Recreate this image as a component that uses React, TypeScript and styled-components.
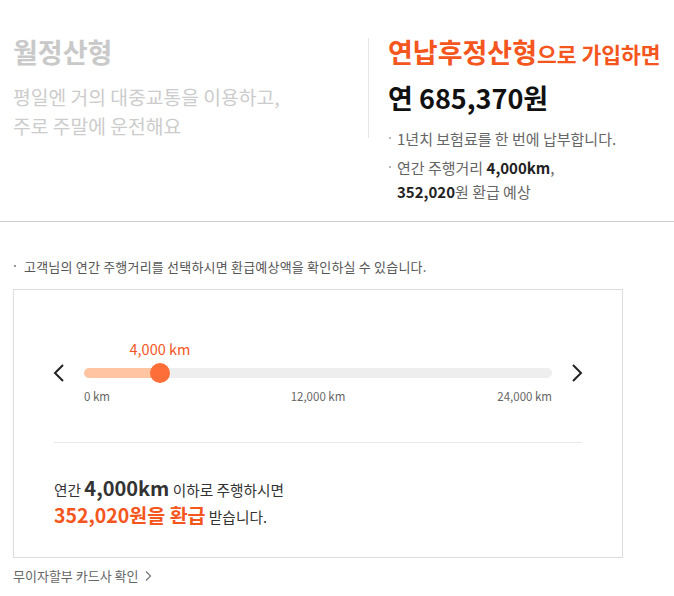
import styled, { createGlobalStyle } from "styled-components";

const ORANGE = "#f4561d";
const FONT = `"Noto Sans CJK KR", "Noto Sans", sans-serif`;

const GlobalStyle = createGlobalStyle`
  body {
    margin: 0;
    background: #fff;
    font-family: ${FONT};
  }
  * { box-sizing: border-box; }
`;

const MAX_KM = 24000;
const SELECTED_KM = 4000;

export default function App() {
  const pos = (SELECTED_KM / MAX_KM) * 100;
  return (
    <Page>
      <GlobalStyle />
      <Compare>
        <PlanColumn>
          <PlanTitle>월정산형</PlanTitle>
          <PlanDesc>
            평일엔 거의 대중교통을 이용하고,
            <br />
            주로 주말에 운전해요
          </PlanDesc>
        </PlanColumn>
        <ResultColumn>
          <ResultTitle>
            연납후정산형<small>으로 가입하면</small>
          </ResultTitle>
          <Amount>연 685,370원</Amount>
          <BulletList>
            <li>1년치 보험료를 한 번에 납부합니다.</li>
            <li>
              연간 주행거리 <b>4,000km</b>,
              <br />
              <b>352,020</b>원 환급 예상
            </li>
          </BulletList>
        </ResultColumn>
      </Compare>

      <Section>
        <Note>고객님의 연간 주행거리를 선택하시면 환급예상액을 확인하실 수 있습니다.</Note>
        <Box>
          <SliderRow>
            <Arrow aria-label="이전">
              <svg width="14" height="20" viewBox="0 0 14 20">
                <polyline points="11,2 3,10 11,18" fill="none" stroke="#222" strokeWidth="2" />
              </svg>
            </Arrow>
            <SliderArea>
              <ValueRow>
                <ValueLabel style={{ left: `calc(${pos}% - 2px)` }}>4,000 km</ValueLabel>
              </ValueRow>
              <Track>
                <Fill style={{ width: `calc(${pos}% - 2px)` }} />
                <Thumb style={{ left: `calc(${pos}% - 2px)` }} />
              </Track>
              <Ticks>
                <span>0 km</span>
                <span>12,000 km</span>
                <span>24,000 km</span>
              </Ticks>
            </SliderArea>
            <Arrow $right aria-label="다음">
              <svg width="14" height="20" viewBox="0 0 14 20">
                <polyline points="3,2 11,10 3,18" fill="none" stroke="#222" strokeWidth="2" />
              </svg>
            </Arrow>
          </SliderRow>
          <Separator />
          <Summary>
            연간 <Strong>4,000km</Strong> 이하로 주행하시면
            <br />
            <Refund>352,020원을 환급</Refund> 받습니다.
          </Summary>
        </Box>
        <CardLink>
          무이자할부 카드사 확인
          <svg width="8" height="12" viewBox="0 0 8 12">
            <polyline points="2,1.5 6.5,6 2,10.5" fill="none" stroke="#777" strokeWidth="1.2" />
          </svg>
        </CardLink>
      </Section>
    </Page>
  );
}

const Page = styled.div`
  width: 674px;
  color: #222;
`;

const Compare = styled.div`
  display: flex;
  align-items: flex-start;
  padding: 38px 0 17px;
  border-bottom: 1px solid #cccccc;
`;

const PlanColumn = styled.div`
  width: 369px;
  padding-left: 13px;
  border-right: 1px solid #e6e6e6;
  height: 100px;
`;

const PlanTitle = styled.h2`
  margin: 0;
  font-size: 27px;
  line-height: 28px;
  font-weight: 700;
  color: #c9c9c9;
`;

const PlanDesc = styled.p`
  margin: 17px 0 0;
  font-size: 19.3px;
  line-height: 29px;
  color: #cccccc;
  white-space: nowrap;
`;

const ResultColumn = styled.div`
  flex: 1;
  padding-left: 19px;
`;

const ResultTitle = styled.h2`
  margin: 0;
  font-size: 27px;
  line-height: 28px;
  font-weight: 700;
  color: ${ORANGE};
  white-space: nowrap;

  small {
    font-size: 21.5px;
    font-weight: 700;
  }
`;

const Amount = styled.div`
  margin-top: 13px;
  font-size: 27px;
  line-height: 34px;
  font-weight: 700;
  color: #111;
`;

const BulletList = styled.ul`
  list-style: none;
  margin: 12px 0 0;
  padding: 0;

  li {
    position: relative;
    padding-left: 9px;
    font-size: 15px;
    line-height: 24px;
    color: #666;
  }
  li + li {
    margin-top: 5px;
  }
  li::before {
    content: "";
    position: absolute;
    left: 1px;
    top: 10px;
    width: 2px;
    height: 2px;
    background: #bbb;
  }
  b {
    color: #222;
    font-weight: 700;
  }
`;

const Section = styled.div`
  padding: 35px 13px 0;
`;

const Note = styled.p`
  position: relative;
  margin: 0;
  padding-left: 11px;
  font-size: 13px;
  line-height: 20px;
  color: #555;
  letter-spacing: 0.2px;

  &::before {
    content: "";
    position: absolute;
    left: 1px;
    top: 8px;
    width: 2px;
    height: 2px;
    background: #999;
  }
`;

const Box = styled.div`
  margin-top: 12px;
  width: 610px;
  border: 1px solid #dddddd;
  padding: 49px 40px 28px;
`;

const SliderRow = styled.div`
  display: grid;
  grid-template-columns: 30px 1fr 30px;
`;

const Arrow = styled.button<{ $right?: boolean }>`
  border: 0;
  background: none;
  padding: 0;
  height: 20px;
  margin-top: 24px;
  display: flex;
  justify-content: ${(p) => (p.$right ? "flex-end" : "flex-start")};
  margin-left: ${(p) => (p.$right ? "0" : "-2px")};
  margin-right: ${(p) => (p.$right ? "-2px" : "0")};
  cursor: pointer;
`;

const SliderArea = styled.div`
  display: flex;
  flex-direction: column;
`;

const ValueRow = styled.div`
  position: relative;
  height: 20px;
`;

const ValueLabel = styled.span`
  position: absolute;
  top: 0;
  transform: translateX(-50%);
  font-size: 14.5px;
  line-height: 20px;
  color: ${ORANGE};
  white-space: nowrap;
`;

const Track = styled.div`
  position: relative;
  margin-top: 4px;
  height: 10px;
  top: 5px;
  border-radius: 5px;
  background: #eeeeee;
  margin-bottom: 10px;
`;

const Fill = styled.div`
  height: 100%;
  border-radius: 5px 0 0 5px;
  background: #ffc5a3;
`;

const Thumb = styled.div`
  position: absolute;
  top: -5px;
  width: 20px;
  height: 20px;
  margin-left: -10px;
  border-radius: 50%;
  background: #fd6e39;
`;

const Ticks = styled.div`
  display: grid;
  grid-template-columns: 1fr auto 1fr;
  margin-top: 5px;
  font-size: 11.5px;
  line-height: 16px;
  color: #666;

  span:last-child {
    text-align: right;
  }
`;

const Separator = styled.hr`
  margin: 38px 0 0;
  border: 0;
  border-top: 1px solid #e8e8e8;
`;

const Summary = styled.p`
  margin: 32px 0 0;
  font-size: 14.7px;
  line-height: 25px;
  color: #333;
`;

const Strong = styled.b`
  font-size: 20px;
  line-height: 25px;
  font-weight: 700;
  color: #333;
`;

const Refund = styled.b`
  font-size: 19.5px;
  line-height: 25px;
  font-weight: 700;
  color: ${ORANGE};
`;

const CardLink = styled.a`
  display: inline-flex;
  align-items: center;
  gap: 6px;
  margin-top: 8px;
  font-size: 13px;
  line-height: 20px;
  color: #666;
  cursor: pointer;
`;
